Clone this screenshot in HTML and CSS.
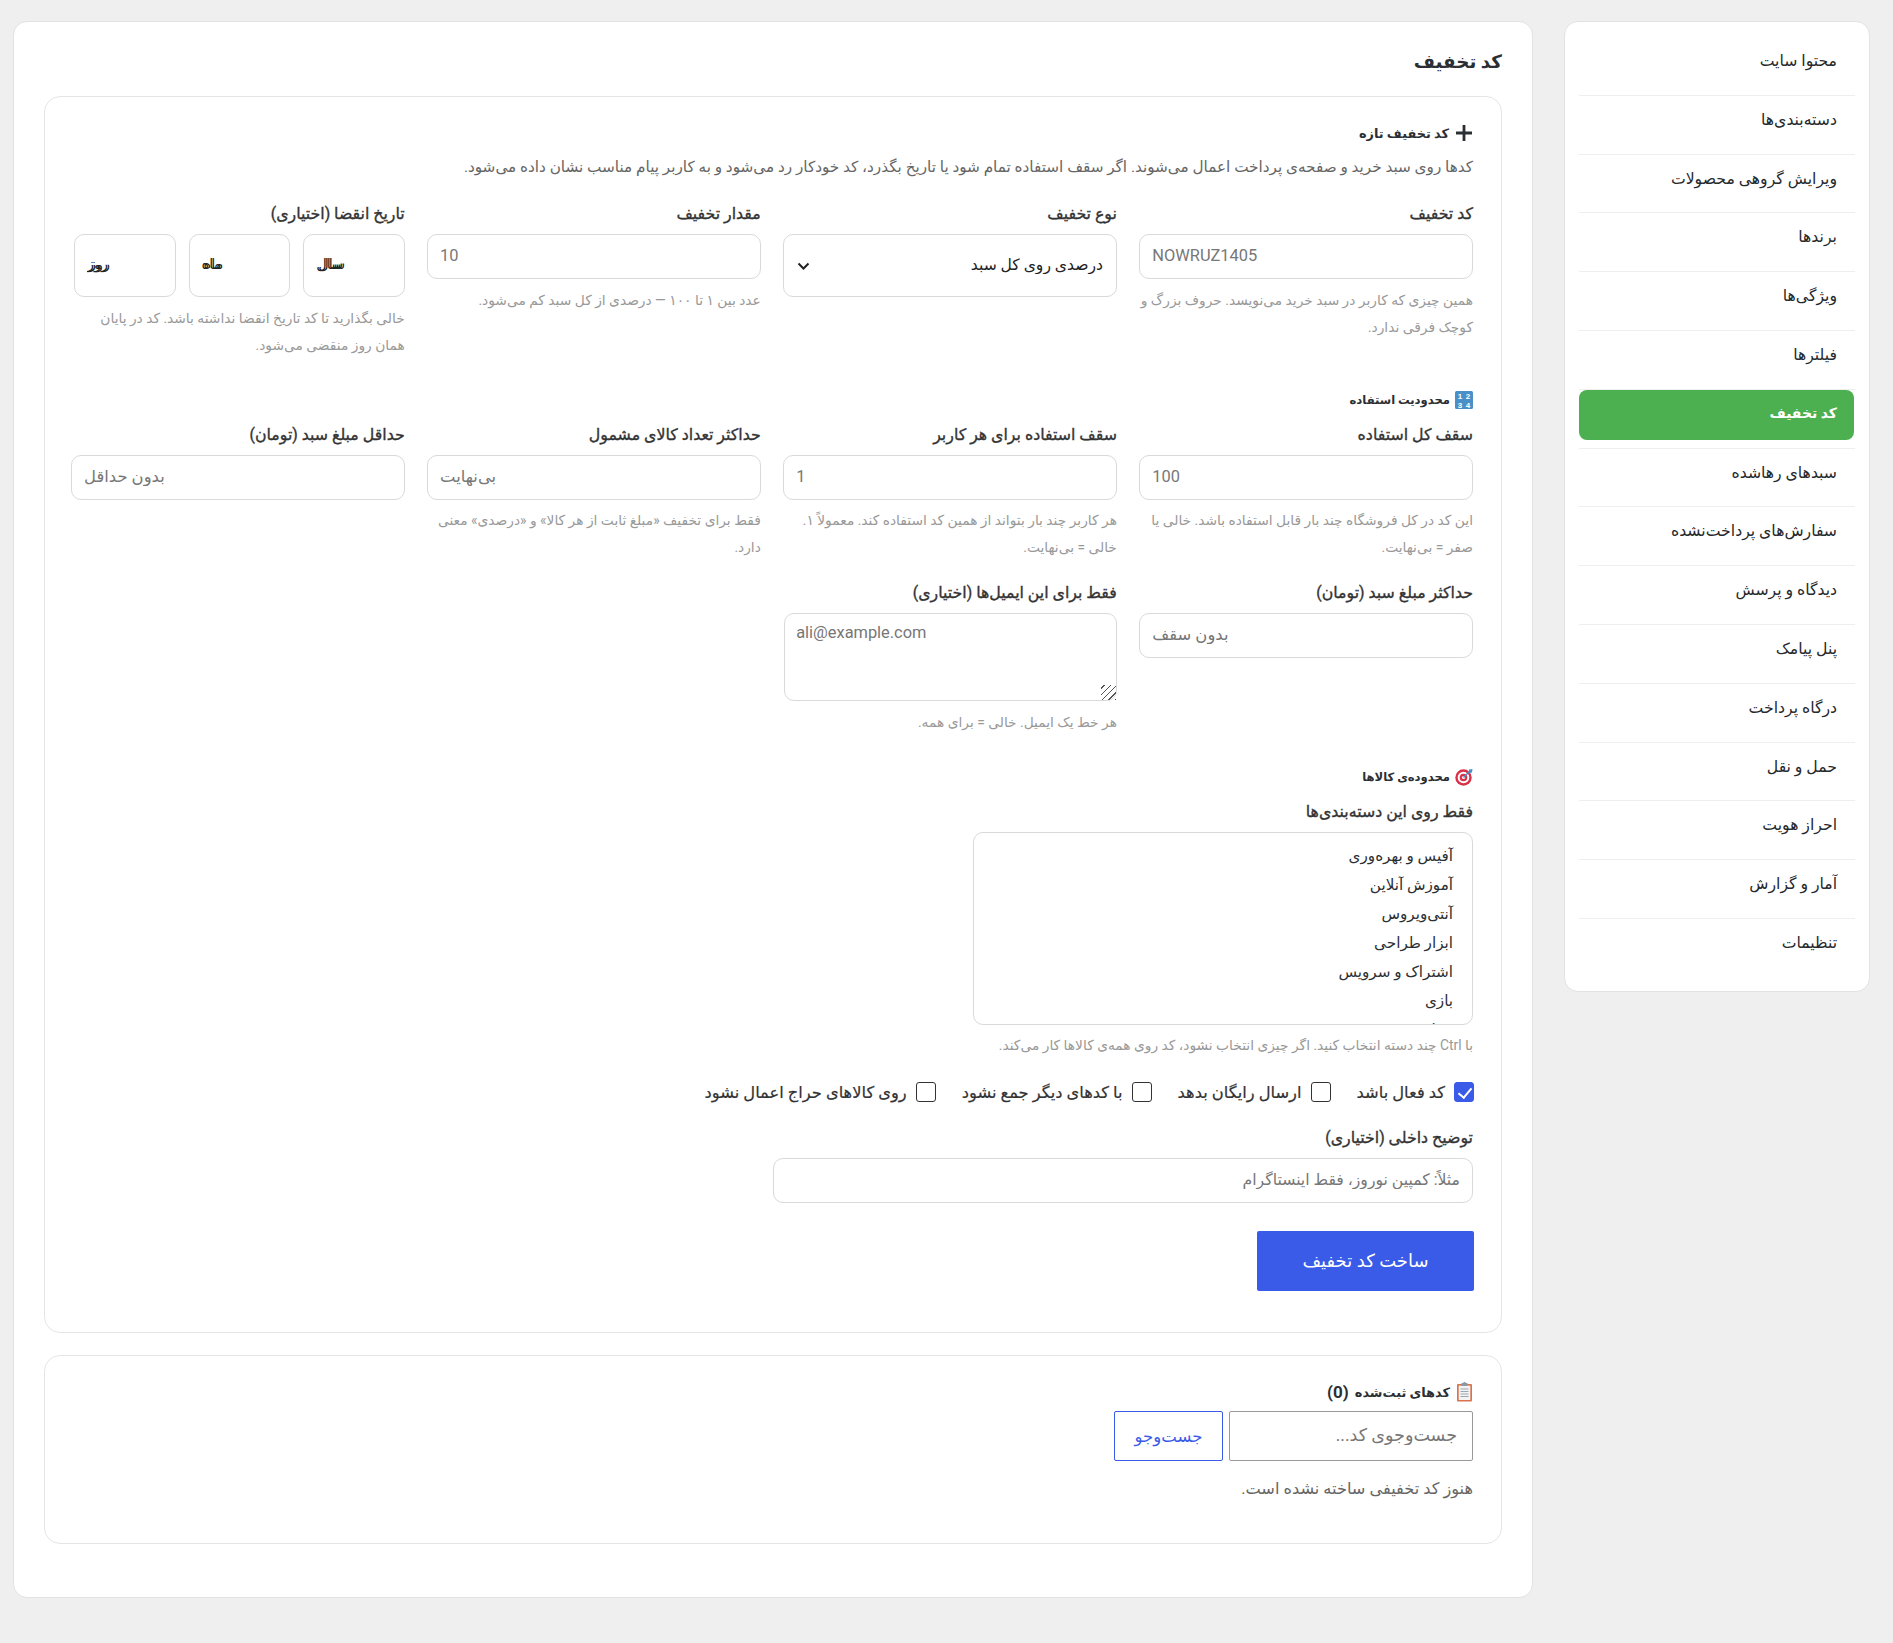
FILE: index.html
```html
<!DOCTYPE html>
<html lang="fa" dir="rtl">
<head>
  <meta charset="UTF-8" />
  <title>کد تخفیف</title>
  <link rel="stylesheet" href="styles.css">
</head>
<body>
  <div class="layout">
    <aside class="sidebar">
      <ul class="side-menu">
        <li><a href="#">محتوا سایت</a></li>
        <li><a href="#">دسته‌بندی‌ها</a></li>
        <li><a href="#">ویرایش گروهی محصولات</a></li>
        <li><a href="#">برندها</a></li>
        <li><a href="#">ویژگی‌ها</a></li>
        <li><a href="#">فیلترها</a></li>
        <li><a href="#" class="active">کد تخفیف</a></li>
        <li><a href="#">سبدهای رهاشده</a></li>
        <li><a href="#">سفارش‌های پرداخت‌نشده</a></li>
        <li><a href="#">دیدگاه و پرسش</a></li>
        <li><a href="#">پنل پیامک</a></li>
        <li><a href="#">درگاه پرداخت</a></li>
        <li><a href="#">حمل و نقل</a></li>
        <li><a href="#">احراز هویت</a></li>
        <li><a href="#">آمار و گزارش</a></li>
        <li><a href="#">تنظیمات</a></li>
      </ul>
    </aside>

    <main class="content">
      <h1 class="page-title">کد تخفیف</h1>

      <section class="card card-form">
        <h2 class="card-title">
          <svg class="ico" width="18" height="18" viewBox="0 0 18 18"><path d="M9 1v16M1 9h16" stroke="#2b2f33" stroke-width="2.8" fill="none"/></svg>
          کد تخفیف تازه
        </h2>
        <p class="desc">کدها روی سبد خرید و صفحه‌ی پرداخت اعمال می‌شوند. اگر سقف استفاده تمام شود یا تاریخ بگذرد، کد خودکار رد می‌شود و به کاربر پیام مناسب نشان داده می‌شود.</p>

        <div class="grid grid-first">
          <div class="field">
            <label>کد تخفیف</label>
            <input type="text" dir="ltr" class="ltr-right" placeholder="NOWRUZ1405">
            <p class="hint">همین چیزی که کاربر در سبد خرید می‌نویسد. حروف بزرگ و کوچک فرقی ندارد.</p>
          </div>
          <div class="field">
            <label>نوع تخفیف</label>
            <div class="select-wrap">
              <select class="tall"><option>درصدی روی کل سبد</option></select>
              <svg class="chevron" width="13" height="8" viewBox="0 0 13 8"><path d="M1.5 1.5l5 5 5-5" stroke="#222" stroke-width="2" fill="none"/></svg>
            </div>
          </div>
          <div class="field">
            <label>مقدار تخفیف</label>
            <input type="text" dir="ltr" class="ltr-right" placeholder="10">
            <p class="hint">عدد بین ۱ تا ۱۰۰ — درصدی از کل سبد کم می‌شود.</p>
          </div>
          <div class="field">
            <label>تاریخ انقضا (اختیاری)</label>
            <div class="date-row">
              <select class="tall bare"><option>سال</option></select>
              <select class="tall bare"><option>ماه</option></select>
              <select class="tall bare"><option>روز</option></select>
            </div>
            <p class="hint">خالی بگذارید تا کد تاریخ انقضا نداشته باشد. کد در پایان همان روز منقضی می‌شود.</p>
          </div>
        </div>

        <h3 class="section-title">
          <svg class="ico" width="18" height="18" viewBox="0 0 18 18"><rect width="18" height="18" rx="1.5" fill="#4a90c8"/><g fill="#fff" font-family="Liberation Sans" font-size="8" font-weight="700" text-anchor="middle"><text x="5" y="8">1</text><text x="13" y="8">2</text><text x="5" y="16.5">3</text><text x="13" y="16.5">4</text></g></svg>
          محدودیت استفاده
        </h3>

        <div class="grid">
          <div class="field">
            <label>سقف کل استفاده</label>
            <input type="text" dir="ltr" class="ltr-right" placeholder="100">
            <p class="hint">این کد در کل فروشگاه چند بار قابل استفاده باشد. خالی یا صفر = بی‌نهایت.</p>
          </div>
          <div class="field">
            <label>سقف استفاده برای هر کاربر</label>
            <input type="text" dir="ltr" class="ltr-right" placeholder="1">
            <p class="hint">هر کاربر چند بار بتواند از همین کد استفاده کند. معمولاً ۱. خالی = بی‌نهایت.</p>
          </div>
          <div class="field">
            <label>حداکثر تعداد کالای مشمول</label>
            <input type="text" dir="ltr" class="ltr-right" placeholder="بی‌نهایت">
            <p class="hint">فقط برای تخفیف «مبلغ ثابت از هر کالا» و «درصدی» معنی دارد.</p>
          </div>
          <div class="field">
            <label>حداقل مبلغ سبد (تومان)</label>
            <input type="text" dir="ltr" class="ltr-right" placeholder="بدون حداقل">
          </div>
          <div class="field">
            <label>حداکثر مبلغ سبد (تومان)</label>
            <input type="text" dir="ltr" class="ltr-right" placeholder="بدون سقف">
          </div>
          <div class="field">
            <label>فقط برای این ایمیل‌ها (اختیاری)</label>
            <textarea dir="ltr" placeholder="ali@example.com"></textarea>
            <p class="hint">هر خط یک ایمیل. خالی = برای همه.</p>
          </div>
        </div>

        <h3 class="section-title">
          <svg class="ico" width="18" height="18" viewBox="0 0 18 18"><circle cx="8.5" cy="9.5" r="8.2" fill="#d8324a"/><circle cx="8.5" cy="9.5" r="5.8" fill="#fff"/><circle cx="8.5" cy="9.5" r="3.8" fill="#d8324a"/><circle cx="8.5" cy="9.5" r="1.6" fill="#fff"/><path d="M8.5 9.5L15.5 2.5" stroke="#4a90c8" stroke-width="1.4"/><path d="M14 1.5l3.5-.5-.5 3.5-2.5.5z" fill="#4a90c8"/></svg>
          محدوده‌ی کالاها
        </h3>

        <div class="field">
          <label>فقط روی این دسته‌بندی‌ها</label>
          <div class="multi">
            <div>آفیس و بهره‌وری</div>
            <div>آموزش آنلاین</div>
            <div>آنتی‌ویروس</div>
            <div>ابزار طراحی</div>
            <div>اشتراک و سرویس</div>
            <div>بازی</div>
            <div>برنامه‌نویسی</div>
          </div>
          <p class="hint hint-wide">با Ctrl چند دسته انتخاب کنید. اگر چیزی انتخاب نشود، کد روی همه‌ی کالاها کار می‌کند.</p>
        </div>

        <div class="checks">
          <label class="check"><input type="checkbox" checked> کد فعال باشد</label>
          <label class="check"><input type="checkbox"> ارسال رایگان بدهد</label>
          <label class="check"><input type="checkbox"> با کدهای دیگر جمع نشود</label>
          <label class="check"><input type="checkbox"> روی کالاهای حراج اعمال نشود</label>
        </div>

        <div class="field field-note">
          <label>توضیح داخلی (اختیاری)</label>
          <input type="text" placeholder="مثلاً: کمپین نوروز، فقط اینستاگرام">
        </div>

        <button class="btn-primary" type="button">ساخت کد تخفیف</button>
      </section>

      <section class="card card-list">
        <h2 class="card-title">
          <svg class="ico" width="17" height="20" viewBox="0 0 16 20"><rect x=".5" y="2" width="15" height="17.5" rx="1" fill="#d9734e"/><rect x="2.2" y="3.6" width="11.6" height="14.4" fill="#f3f3f3"/><path d="M4 7h8M4 9.5h8M4 12h8M4 14.5h8" stroke="#9aa7b0" stroke-width="1"/><rect x="5" y="1" width="6" height="3" fill="#8a9aa3"/><rect x="7" y="0" width="2" height="2" fill="#8a9aa3"/></svg>
          کدهای ثبت‌شده <span class="count">(0)</span>
        </h2>
        <form class="search-row">
          <input type="text" placeholder="جست‌وجوی کد...">
          <button type="button">جست‌وجو</button>
        </form>
        <p class="empty">هنوز کد تخفیفی ساخته نشده است.</p>
      </section>
    </main>
  </div>
</body>
</html>
```

FILE: styles.css
```css
* {
  box-sizing: border-box;
}
body {
  margin: 0;
  background: #efefef;
  color: #2b2f33;
  font-family: Roboto, "DejaVu Sans", sans-serif;
  font-size: 15px;
}
.layout {
  display: flex;
  gap: 31px;
  padding: 21px 23px 46px 13px;
  align-items: flex-start;
}

/* sidebar */
.sidebar {
  width: 306px;
  flex: none;
  background: #fff;
  border: 1px solid #e2e2e2;
  border-radius: 14px;
  padding: 15px 14px 14px;
}
.side-menu {
  list-style: none;
  margin: 0;
  padding: 0;
}
.side-menu li {
  padding-bottom: 7.8px;
  border-bottom: 1px solid #eee;
}
.side-menu li:last-child {
  border-bottom: none;
}
.side-menu a {
  display: flex;
  align-items: center;
  height: 50px;
  margin-right: 1px;
  padding: 0 17px 3px;
  border-radius: 8px;
  color: #26292c;
  text-decoration: none;
  font-size: 15.7px;
}
.side-menu a.active {
  background: #4caf50;
  color: #fff;
  font-size: 14px;
  font-weight: 700;
}

/* main */
.content {
  flex: 1;
  min-width: 0;
  background: #fff;
  border: 1px solid #e2e2e2;
  border-radius: 14px;
  padding: 0 30px 53px 30px;
}
.page-title {
  margin: 0;
  height: 74px;
  display: flex;
  align-items: center;
  padding-top: 5px;
  font-size: 18.3px;
  font-weight: 700;
}
.card {
  border: 1px solid #e5e5e5;
  border-radius: 16px;
  padding: 0 28px 0 26px;
}
.card-form {
  height: 1237px;
  padding-top: 24px;
}
.card-list {
  margin-top: 22px;
  height: 189px;
  padding-top: 24px;
}
.card-title,
.section-title {
  display: flex;
  align-items: center;
  gap: 5px;
  margin: 0;
  height: 24px;
  font-size: 12.9px;
  font-weight: 700;
}
.card-title {
  gap: 6px;
}
.section-title {
  height: 20px;
  margin: 31px 0 15px;
  font-size: 11.6px;
}
.count {
  font-size: 17px;
}
.desc {
  margin: 10px 0 0;
  height: 24px;
  line-height: 24px;
  font-size: 15.25px;
  color: #666;
}
.grid {
  display: grid;
  grid-template-columns: repeat(4, 1fr);
  gap: 22px 22.4px;
}
.grid-first {
  margin-top: 25px;
}
.field label {
  display: block;
  height: 20px;
  line-height: 20px;
  margin-bottom: 10px;
  font-size: 15.8px;
  -webkit-text-stroke: 0.35px #333;
  color: #333;
}
input[type="text"],
select,
textarea {
  display: block;
  width: 100%;
  height: 45px;
  padding: 0 12px 2px;
  border: 1px solid #d9d9d9;
  border-radius: 10px;
  background: #fff;
  font-family: inherit;
  font-size: 16.4px;
  color: #2b2f33;
  outline: none;
}
input::placeholder,
textarea::placeholder {
  color: #777;
  opacity: 1;
}
.ltr-right {
  text-align: left;
}
.select-wrap {
  position: relative;
}
.chevron {
  position: absolute;
  left: 14px;
  top: 28px;
}
select.tall {
  appearance: none;
  height: 63px;
  padding: 0 13px 2px;
  font-size: 15.6px;
  color: #222;
}
select.bare {
  direction: ltr;
  padding: 0 12px 2px;
  font-size: 14.5px;
  text-shadow: 2px 0 0 #222;
}
.date-row {
  display: grid;
  grid-template-columns: repeat(3, 1fr);
  gap: 13px;
  padding-left: 3px;
}
textarea {
  width: calc(100% - 1px);
  height: 88px;
  padding: 9px 11px;
  resize: vertical;
}
textarea::-webkit-resizer {
  background: repeating-linear-gradient(135deg, transparent 0 2px, #555 2px 3px, transparent 3px 4.5px);
}
.hint {
  margin: 7.5px 0 0;
  line-height: 27px;
  font-size: 13.8px;
  color: #999;
}
.hint-wide {
  margin-top: 7px;
}
.multi {
  width: 500px;
  height: 193px;
  border: 1px solid #d9d9d9;
  border-radius: 10px;
  padding: 9px 19px 0;
  overflow: hidden;
  font-size: 15.2px;
  line-height: 29px;
  color: #2b2f33;
}
.checks {
  display: flex;
  gap: 26px;
  margin: 23.5px -1px 0 0;
  height: 20px;
}
.check {
  display: flex;
  align-items: center;
  gap: 9px;
  font-size: 16.3px;
  -webkit-text-stroke: 0.2px #333;
  color: #333;
}
.check input {
  appearance: none;
  position: relative;
  flex: none;
  width: 20px;
  height: 20px;
  margin: 0;
  border: 1px solid #333;
  border-radius: 3px;
  background: #fff;
}
.check input:checked {
  border-color: #3a5ae8;
  background: #3a5ae8;
}
.check input:checked::after {
  content: "";
  position: absolute;
  left: 6px;
  top: 2px;
  width: 6px;
  height: 11px;
  border: solid #fff;
  border-width: 0 2.4px 2.4px 0;
  transform: rotate(40deg);
}
.field-note {
  margin-top: 26px;
  width: 700px;
}
.field-note input[type="text"] {
  font-size: 15.7px;
}
.btn-primary {
  display: block;
  width: 217px;
  height: 60px;
  margin: 28px 0 0;
  margin-right: -1px;
  padding-bottom: 3px;
  border: none;
  border-radius: 2px;
  background: #3a5ae8;
  color: #fff;
  font-family: inherit;
  font-size: 18px;
}
.search-row {
  display: flex;
  gap: 6px;
  margin-top: 7px;
}
.search-row input[type="text"] {
  width: 244px;
  height: 50px;
  border: 1px solid #999;
  border-radius: 2px;
  padding: 0 15px 2px;
  font-size: 17.5px;
}
.search-row button {
  width: 109px;
  height: 50px;
  border: 1px solid #3a5ae8;
  border-radius: 2px;
  background: #fff;
  color: #3a5ae8;
  font-family: inherit;
  font-size: 16.5px;
}
.empty {
  margin: 18px 0 0;
  line-height: 20px;
  font-size: 16.2px;
  color: #666;
}
```
